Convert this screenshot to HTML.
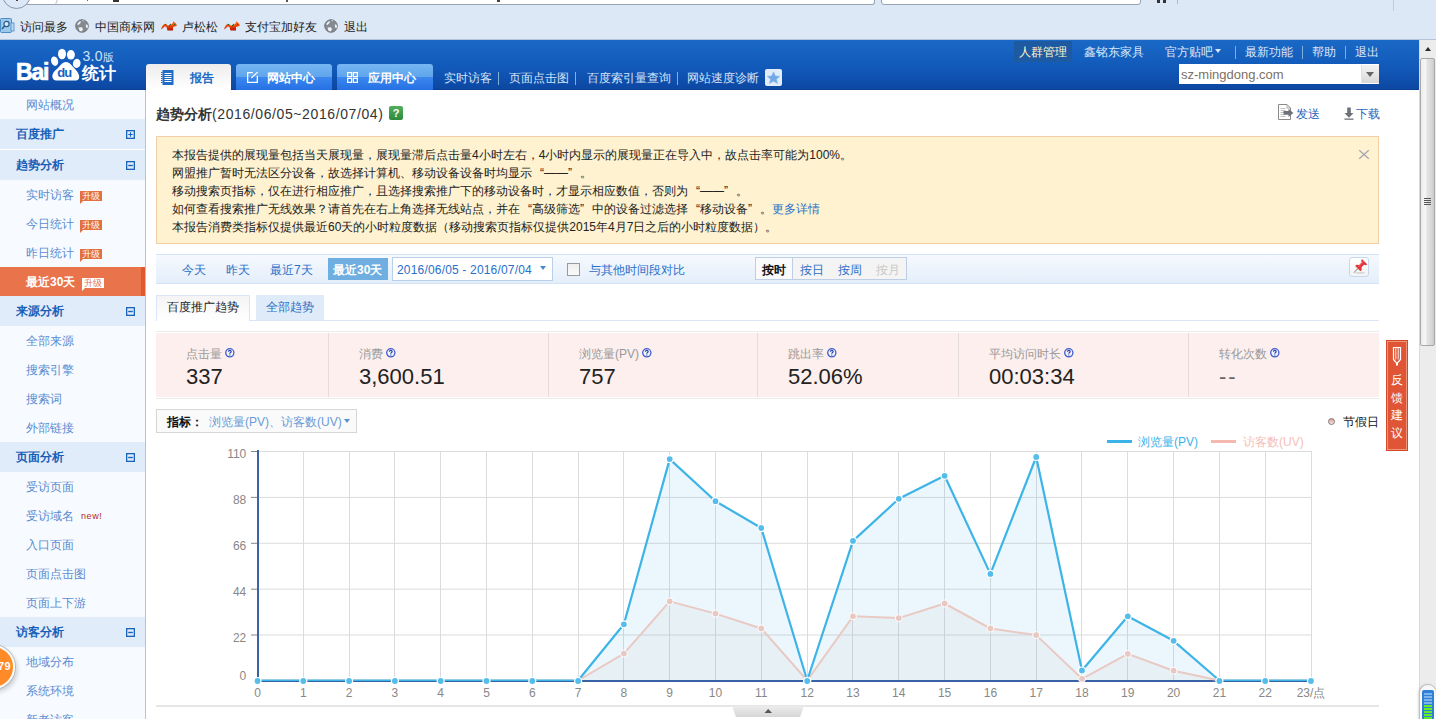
<!DOCTYPE html>
<html><head><meta charset="utf-8">
<style>
*{margin:0;padding:0;box-sizing:border-box}
html,body{width:1436px;height:719px;overflow:hidden;background:#fff;font-family:"Liberation Sans",sans-serif;font-size:12px;color:#333}
.a{position:absolute;white-space:nowrap}
.lq{display:inline-block;width:12px;text-align:right}
.rq{display:inline-block;width:12px;text-align:left}
#topbar{position:absolute;left:0;top:0;width:1436px;height:40px;background:#dce8f6;border-bottom:1px solid #b4c4d8}
#hdr{position:absolute;left:0;top:40px;width:1419px;height:50px;background:linear-gradient(#1a69c6,#1158b8 60%,#0c47a2);border-bottom:1px solid #0b3f94}
#side{position:absolute;left:0;top:90px;width:146px;height:629px;background:#f7fbff;border-right:1px solid #a9c5ee}
#scroll{position:absolute;left:1419px;top:40px;width:17px;height:679px;background:#ececec;border-left:1px solid #dadada}
.si{position:absolute;left:26px;color:#5b8bd0;font-size:12px;line-height:29px;height:29px;white-space:nowrap;padding-top:1px}
.sh{position:absolute;left:0;width:145px;height:30px;background:#e1ecfa;color:#1760b8;font-weight:bold;font-size:12px;line-height:30px;padding-left:16px;white-space:nowrap}
.pm{position:absolute;left:126px;top:11px;width:9px;height:9px}
.bd{display:inline-block;position:relative;vertical-align:middle;margin-left:6px;top:0px;width:22px;height:10px;background:#e3703f;color:#fff;font-size:9px;line-height:10px;text-align:center;font-weight:normal}
.bd:after{content:"";position:absolute;left:0;bottom:-3px;border-left:3px solid #e3703f;border-bottom:3px solid transparent}
.bdw:after{border-left-color:#fff}
</style></head><body>
<!-- browser bookmark bar -->
<div id="topbar">
  <div class="a" style="left:24px;top:-6px;width:851px;height:11px;background:#fff;border:1px solid #95a3b5;border-left:none;border-radius:0 0 3px 0"></div><div class="a" style="left:56px;top:0;width:1px;height:4px;background:#b8c0c8;transform:skewX(-20deg)"></div><div class="a" style="left:113px;top:0;width:6px;height:1.5px;background:#333"></div><div class="a" style="left:87px;top:0;width:1px;height:1px;background:#666"></div><div class="a" style="left:286px;top:0;width:2px;height:2px;background:#555"></div><div class="a" style="left:497px;top:0;width:3px;height:2px;background:#444"></div>
  <div class="a" style="left:881px;top:-6px;width:260px;height:11px;background:#fff;border:1px solid #95a3b5;border-radius:0 0 3px 3px"></div>
  <div class="a" style="left:2px;top:-20px;width:29px;height:29px;border-radius:50%;background:#dce8f6;border:1px solid #8796aa"></div><div class="a" style="left:16px;top:0;width:2px;height:1px;background:#444"></div>
  <div class="a" style="left:1393px;top:0;width:1px;height:11px;background:#c2ccd8"></div><div class="a" style="left:1157px;top:0;width:3px;height:3px;background:#333"></div><div class="a" style="left:1163px;top:0;width:3px;height:3px;background:#333"></div><div class="a" style="left:1177px;top:0;width:1px;height:4px;background:#b0b8c4"></div>
  <svg class="a" style="left:0;top:17px" width="16" height="17" viewBox="0 0 16 17"><rect x="0.5" y="1.5" width="11" height="14" rx="1" fill="#9cc8ec" stroke="#4a8cc4"/><rect x="11" y="6" width="3" height="8" fill="#bcd8f0" stroke="#4a8cc4" stroke-width="0.8"/><circle cx="6.5" cy="7" r="2.6" fill="#d8ecfa" stroke="#2a5a8a" stroke-width="1.2"/><line x1="4.6" y1="9" x2="2" y2="12" stroke="#2a5a8a" stroke-width="1.5"/></svg>
  <div class="a" style="left:20px;top:18px;font-size:12px;line-height:16px;margin-top:1px;color:#222">访问最多</div>
  <svg class="a" style="left:75px;top:19px" width="14" height="14" viewBox="0 0 14 14"><circle cx="7" cy="7" r="6.3" fill="#858a90" stroke="#6c7076" stroke-width="0.9"/><path d="M2.2 5.5 Q3 2.5 6 2.3 L5.5 4 L3.5 6 Z M3.5 8.5 L7 8.2 L8 10.5 L6.5 12.5 L4.5 11.8 Z M10.8 5.3 L12.8 6 L12.9 9 L11 8.6 Z M6.8 1.3 L9 1.4 L8.5 2.4 Z" fill="#eef2f8"/></svg>
  <div class="a" style="left:95px;top:18px;font-size:12px;line-height:16px;margin-top:1px;color:#222">中国商标网</div>
  <svg class="a" style="left:156px;top:16px" width="28" height="20" viewBox="0 0 28 20"><defs><linearGradient id="bg156" x1="0" y1="0" x2="0" y2="1"><stop offset="0.3" stop-color="#ff5a08"/><stop offset="1" stop-color="#b81204"/></linearGradient></defs><path d="M5 13.5 C6 10 7.5 8 9 8 C10.5 8 11.5 9.5 12.5 9.8 C14 9.5 15.5 8.5 16.5 7.5 L17.5 5.2 L19 6.8 C20 7.5 20.5 8.5 21 9.5 L19.5 10.2 L17 11 L17 14.5 L11.5 14.5 L10.5 11 C9.5 10 8 10.5 7 12 Z" fill="url(#bg156)"/><g fill="#1a6a1a"><circle cx="9.5" cy="8.4" r="0.7"/><circle cx="13.4" cy="9.5" r="0.7"/><circle cx="14.5" cy="8.4" r="0.6"/><circle cx="18.5" cy="8.5" r="0.7"/></g></svg>
  <div class="a" style="left:182px;top:18px;font-size:12px;line-height:16px;margin-top:1px;color:#222">卢松松</div>
  <svg class="a" style="left:219px;top:16px" width="28" height="20" viewBox="0 0 28 20"><defs><linearGradient id="bg219" x1="0" y1="0" x2="0" y2="1"><stop offset="0.3" stop-color="#ff5a08"/><stop offset="1" stop-color="#b81204"/></linearGradient></defs><path d="M5 13.5 C6 10 7.5 8 9 8 C10.5 8 11.5 9.5 12.5 9.8 C14 9.5 15.5 8.5 16.5 7.5 L17.5 5.2 L19 6.8 C20 7.5 20.5 8.5 21 9.5 L19.5 10.2 L17 11 L17 14.5 L11.5 14.5 L10.5 11 C9.5 10 8 10.5 7 12 Z" fill="url(#bg219)"/><g fill="#1a6a1a"><circle cx="9.5" cy="8.4" r="0.7"/><circle cx="13.4" cy="9.5" r="0.7"/><circle cx="14.5" cy="8.4" r="0.6"/><circle cx="18.5" cy="8.5" r="0.7"/></g></svg>
  <div class="a" style="left:245px;top:18px;font-size:12px;line-height:16px;margin-top:1px;color:#222">支付宝加好友</div>
  <svg class="a" style="left:324px;top:19px" width="14" height="14" viewBox="0 0 14 14"><circle cx="7" cy="7" r="6.3" fill="#858a90" stroke="#6c7076" stroke-width="0.9"/><path d="M2.2 5.5 Q3 2.5 6 2.3 L5.5 4 L3.5 6 Z M3.5 8.5 L7 8.2 L8 10.5 L6.5 12.5 L4.5 11.8 Z M10.8 5.3 L12.8 6 L12.9 9 L11 8.6 Z M6.8 1.3 L9 1.4 L8.5 2.4 Z" fill="#eef2f8"/></svg>
  <div class="a" style="left:344px;top:18px;font-size:12px;line-height:16px;margin-top:1px;color:#222">退出</div>
</div>
<div id="hdr">
  <!-- logo -->
  <svg class="a" style="left:14px;top:6px" width="104" height="36" viewBox="0 0 104 36">
    <text x="2" y="34.4" font-family="Liberation Sans" font-weight="bold" font-size="23" fill="#fff" stroke="#fff" stroke-width="0.7" letter-spacing="-1.2">Bai</text>
    <ellipse cx="40.6" cy="15.2" rx="3.5" ry="4.8" fill="#fff" transform="rotate(-15 40.6 15.2)"/>
    <ellipse cx="48" cy="8" rx="4" ry="5.2" fill="#fff"/>
    <ellipse cx="56.9" cy="8.8" rx="4" ry="4.8" fill="#fff"/>
    <ellipse cx="62.7" cy="17.4" rx="3.8" ry="4.6" fill="#fff" transform="rotate(15 62.7 17.4)"/>
    <path d="M52 16 C48 16 46 20 43 23 C39 26 38 29 38.5 31.5 C39 34 41 34.6 44 34.6 L60 34.6 C63 34.6 65 34 65.2 31.5 C65.5 29 64 26 61 23 C58 20 56 16 52 16 Z" fill="#fff"/>
    <text x="43.2" y="31.4" font-family="Liberation Sans" font-weight="bold" font-size="13" fill="#1762c2" letter-spacing="-0.8">du</text>
    <text x="68.5" y="15.4" font-family="Liberation Sans" font-size="14" fill="#cfe2fa" letter-spacing="0.3">3.0</text>
    <text x="88.5" y="15" font-family="Liberation Sans" font-size="11" fill="#cfe2fa">版</text>
    <text x="68" y="32.8" font-family="Liberation Sans" font-weight="bold" font-size="17" fill="#fff">统计</text>
  </svg>
  <!-- tabs -->
  <div class="a" style="left:146px;top:24px;width:85px;height:26px;border-radius:3px 3px 0 0;background:linear-gradient(#ececec,#fafafa 70%,#fff)">
    <svg class="a" style="left:15px;top:6px" width="13" height="15" viewBox="0 0 13 15"><rect x="1.5" y="0" width="11" height="15" fill="#1e6cc4"/><g stroke="#fff" stroke-width="1"><line x1="3.5" y1="3.5" x2="10.5" y2="3.5"/><line x1="3.5" y1="5.5" x2="10.5" y2="5.5"/><line x1="3.5" y1="7.5" x2="10.5" y2="7.5"/><line x1="3.5" y1="9.5" x2="10.5" y2="9.5"/><line x1="3.5" y1="11.5" x2="10.5" y2="11.5"/></g><g fill="#1e6cc4"><rect x="0" y="2" width="1.5" height="1"/><rect x="0" y="4" width="1.5" height="1"/><rect x="0" y="6" width="1.5" height="1"/><rect x="0" y="8" width="1.5" height="1"/><rect x="0" y="10" width="1.5" height="1"/><rect x="0" y="12" width="1.5" height="1"/></g></svg>
    <div class="a" style="left:44px;top:5px;font-size:12px;line-height:16px;margin-top:1px;font-weight:bold;color:#1a6ac6">报告</div>
  </div>
  <div class="a" style="left:236px;top:24px;width:96px;height:26px;border-radius:3px 3px 0 0;background:linear-gradient(#76b6f2,#5fa4ec 50%,#3b88ee 51%,#2670e4)">
    <svg class="a" style="left:11px;top:8px" width="12" height="12" viewBox="0 0 12 12"><path d="M5.8 0.65 H0.65 V10.35 H10.35 V3.8" fill="none" stroke="#fff" stroke-width="1.3"/><line x1="4.3" y1="6" x2="10.7" y2="0" stroke="#fff" stroke-width="1.1"/></svg>
    <div class="a" style="left:31px;top:5px;font-size:12px;line-height:16px;margin-top:1px;font-weight:bold;color:#fff">网站中心</div>
  </div>
  <div class="a" style="left:337px;top:24px;width:96px;height:26px;border-radius:3px 3px 0 0;background:linear-gradient(#76b6f2,#5fa4ec 50%,#3b88ee 51%,#2670e4)">
    <svg class="a" style="left:10px;top:8px" width="11" height="11" viewBox="0 0 11 11"><g fill="none" stroke="#fff" stroke-width="1.25"><rect x="0.62" y="0.62" width="4" height="4"/><rect x="6.38" y="0.62" width="4" height="4"/><rect x="0.62" y="6.38" width="4" height="4"/><rect x="6.38" y="6.38" width="4" height="4"/></g></svg>
    <div class="a" style="left:31px;top:5px;font-size:12px;line-height:16px;margin-top:1px;font-weight:bold;color:#fff">应用中心</div>
  </div>
  <div class="a" style="left:444px;top:29px;font-size:12px;line-height:16px;margin-top:1px;color:#d4e4f8">实时访客</div>
  <div class="a" style="left:498px;top:32px;width:1px;height:13px;background:#7fb2d8"></div>
  <div class="a" style="left:509px;top:29px;font-size:12px;line-height:16px;margin-top:1px;color:#d4e4f8">页面点击图</div>
  <div class="a" style="left:575px;top:32px;width:1px;height:13px;background:#7fb2d8"></div>
  <div class="a" style="left:587px;top:29px;font-size:12px;line-height:16px;margin-top:1px;color:#d4e4f8">百度索引量查询</div>
  <div class="a" style="left:677px;top:32px;width:1px;height:13px;background:#7fb2d8"></div>
  <div class="a" style="left:687px;top:29px;font-size:12px;line-height:16px;margin-top:1px;color:#d4e4f8">网站速度诊断</div>
  <div class="a" style="left:765px;top:29px;width:17px;height:17px;background:#e2edfb;border-radius:2px">
    <svg class="a" style="left:1px;top:1px" width="15" height="15" viewBox="0 0 15 15"><path d="M7.5 1.8 L9.4 5.9 L13.8 6.3 L10.5 9.2 L11.6 13.5 L7.5 11.3 L3.4 13.5 L4.5 9.2 L1.2 6.3 L5.6 5.9 Z" fill="#72aae6" stroke="#8cbcec" stroke-width="0.6" stroke-linejoin="round"/></svg>
  </div>
  <!-- top right -->
  <div class="a" style="left:1014px;top:1px;width:58px;height:21px;background:#1d5aa2"></div>
  <div class="a" style="left:1019px;top:3px;font-size:12px;line-height:16px;margin-top:1px;color:#fdf6cc">人群管理</div>
  <div class="a" style="left:1084px;top:3px;font-size:12px;line-height:16px;margin-top:1px;color:#dce8f8">鑫铭东家具</div>
  <div class="a" style="left:1165px;top:3px;font-size:12px;line-height:16px;margin-top:1px;color:#dce8f8">官方贴吧</div>
  <div class="a" style="left:1215px;top:9px;width:0;height:0;border-left:3.5px solid transparent;border-right:3.5px solid transparent;border-top:4px solid #dce8f8"></div>
  <div class="a" style="left:1235px;top:6px;width:1px;height:13px;background:#7fb2d8"></div>
  <div class="a" style="left:1245px;top:3px;font-size:12px;line-height:16px;margin-top:1px;color:#dce8f8">最新功能</div>
  <div class="a" style="left:1302px;top:6px;width:1px;height:13px;background:#7fb2d8"></div>
  <div class="a" style="left:1312px;top:3px;font-size:12px;line-height:16px;margin-top:1px;color:#dce8f8">帮助</div>
  <div class="a" style="left:1345px;top:6px;width:1px;height:13px;background:#7fb2d8"></div>
  <div class="a" style="left:1355px;top:3px;font-size:12px;line-height:16px;margin-top:1px;color:#dce8f8">退出</div>
  <div class="a" style="left:1179px;top:24px;width:200px;height:20px;background:#fff">
    <div class="a" style="left:2px;top:2px;font-size:13px;line-height:16px;margin-top:1px;color:#7d7064">sz-mingdong.com</div>
    <div class="a" style="left:182px;top:1px;width:18px;height:18px;background:linear-gradient(#f4f4f4,#d8d8d8);border-left:1px solid #e0e0e0"></div>
    <div class="a" style="left:187px;top:8px;width:0;height:0;border-left:4px solid transparent;border-right:4px solid transparent;border-top:5px solid #666"></div>
  </div>
</div>
<div id="side">
<div class="si" style="top:0px">网站概况</div>
<div class="sh" style="top:29px;height:30px">百度推广<svg class="pm" viewBox="0 0 9 9"><rect x="0.65" y="0.65" width="7.7" height="7.7" fill="none" stroke="#1a63b8" stroke-width="1.3"/><path d="M2.2 4.5H6.8M4.5 2.2V6.8" stroke="#1a63b8" stroke-width="1.15"/></svg></div>
<div class="a" style="left:0;top:59px;width:145px;height:1px;background:#fff"></div>
<div class="sh" style="top:60px;height:30px">趋势分析<svg class="pm" viewBox="0 0 9 9"><rect x="0.65" y="0.65" width="7.7" height="7.7" fill="none" stroke="#1a63b8" stroke-width="1.3"/><path d="M2.2 4.5H6.8" stroke="#1a63b8" stroke-width="1.4"/></svg></div>
<div class="si" style="top:90px">实时访客<span class="bd">升级</span></div>
<div class="si" style="top:119px">今日统计<span class="bd">升级</span></div>
<div class="si" style="top:148px">昨日统计<span class="bd">升级</span></div>
<div class="a" style="left:0;top:177px;width:145px;height:29px;background:#e9744b;border-right:4px solid #e0582e"></div>
<div class="si" style="top:177px;color:#fff;font-weight:bold">最近30天<span class="bd bdw" style="background:#fff;color:#e3703f;margin-left:7px">升级</span></div>
<div class="sh" style="top:206px;height:30px">来源分析<svg class="pm" viewBox="0 0 9 9"><rect x="0.65" y="0.65" width="7.7" height="7.7" fill="none" stroke="#1a63b8" stroke-width="1.3"/><path d="M2.2 4.5H6.8" stroke="#1a63b8" stroke-width="1.4"/></svg></div>
<div class="si" style="top:236px">全部来源</div>
<div class="si" style="top:265px">搜索引擎</div>
<div class="si" style="top:294px">搜索词</div>
<div class="si" style="top:323px">外部链接</div>
<div class="sh" style="top:352px;height:30px">页面分析<svg class="pm" viewBox="0 0 9 9"><rect x="0.65" y="0.65" width="7.7" height="7.7" fill="none" stroke="#1a63b8" stroke-width="1.3"/><path d="M2.2 4.5H6.8" stroke="#1a63b8" stroke-width="1.4"/></svg></div>
<div class="si" style="top:382px">受访页面</div>
<div class="si" style="top:411px">受访域名<span style="color:#b02828;font-size:9px;letter-spacing:0.6px;margin-left:7px;vertical-align:1px">new!</span></div>
<div class="si" style="top:440px">入口页面</div>
<div class="si" style="top:469px">页面点击图</div>
<div class="si" style="top:498px">页面上下游</div>
<div class="sh" style="top:527px;height:30px">访客分析<svg class="pm" viewBox="0 0 9 9"><rect x="0.65" y="0.65" width="7.7" height="7.7" fill="none" stroke="#1a63b8" stroke-width="1.3"/><path d="M2.2 4.5H6.8" stroke="#1a63b8" stroke-width="1.4"/></svg></div>
<div class="si" style="top:557px">地域分布</div>
<div class="si" style="top:586px">系统环境</div>
<div class="si" style="top:615px">新老访客</div>
</div>

<!-- main content -->
<div class="a" style="left:156px;top:105px;font-size:14px;line-height:18px;color:#333"><b>趋势分析</b><span style="letter-spacing:0.6px">(2016/06/05~2016/07/04)</span></div>
<div class="a" style="left:389px;top:106px;width:14px;height:14px;background:linear-gradient(#4fae5c,#2f8a3e);border-radius:2px;color:#fff;font-weight:bold;font-size:11px;line-height:14px;text-align:center">?</div>
<svg class="a" style="left:1277px;top:103px" width="18" height="18" viewBox="0 0 18 18"><path d="M1.5 1.5H10L13.5 5V16.5H1.5Z" fill="#fff" stroke="#8a8a8a"/><path d="M10 1.5V5H13.5" fill="none" stroke="#9a9a9a" stroke-width="0.8"/><path d="M3.5 5.5H8.5M3.5 7.5H8.5M3.5 9.5H7M3.5 11.5H7M3.5 13.5H8.5" stroke="#b0b0b0" stroke-width="0.8"/><path d="M6.5 8H11.5V5.8L16.3 9.9L11.5 14V11.8H6.5Z" fill="#6e7278"/></svg>
<div class="a" style="left:1296px;top:105px;font-size:12px;line-height:16px;margin-top:1px;color:#1e64c0">发送</div>
<svg class="a" style="left:1343px;top:104px" width="12" height="17" viewBox="0 0 12 17"><path d="M4.2 3.5H7.8V9H10.5L6 13.8L1.5 9H4.2Z" fill="#6e7278"/><rect x="1.5" y="14.5" width="9" height="1.3" fill="#6e7278"/></svg>
<div class="a" style="left:1356px;top:105px;font-size:12px;line-height:16px;margin-top:1px;color:#1e64c0">下载</div>

<div class="a" style="left:156px;top:136px;width:1223px;height:108px;background:#fff2d0;border:1px solid #f2cfa6"></div>
<div class="a" style="left:172px;top:146px;font-size:12px;line-height:18px;color:#222">本报告提供的展现量包括当天展现量，展现量滞后点击量4小时左右，4小时内显示的展现量正在导入中，故点击率可能为100%。<br>网盟推广暂时无法区分设备，故选择计算机、移动设备设备时均显示<span class="lq">“</span>——<span class="rq">”</span>。<br>移动搜索页指标，仅在进行相应推广，且选择搜索推广下的移动设备时，才显示相应数值，否则为<span class="lq">“</span>——<span class="rq">”</span>。<br>如何查看搜索推广无线效果？请首先在右上角选择无线站点，并在<span class="lq">“</span>高级筛选<span class="rq">”</span>中的设备过滤选择<span class="lq">“</span>移动设备<span class="rq">”</span>。<span style="color:#2a6fc8">更多详情</span><br>本报告消费类指标仅提供最近60天的小时粒度数据（移动搜索页指标仅提供2015年4月7日之后的小时粒度数据）。</div>
<svg class="a" style="left:1358px;top:149px" width="12" height="11" viewBox="0 0 12 11"><path d="M1.2 1.2L10.8 9.8M10.8 1.2L1.2 9.8" stroke="#a4a8b0" stroke-width="1.3"/></svg>

<!-- filter bar -->
<div class="a" style="left:156px;top:254px;width:1223px;height:30px;background:linear-gradient(#f6f9fe,#e4eefa);border-top:1px solid #d4e4f6;border-bottom:1px solid #d4e4f6"></div>
<div class="a" style="left:182px;top:261px;font-size:12px;line-height:16px;margin-top:1px;color:#2a6fc8">今天</div>
<div class="a" style="left:226px;top:261px;font-size:12px;line-height:16px;margin-top:1px;color:#2a6fc8">昨天</div>
<div class="a" style="left:270px;top:261px;font-size:12px;line-height:16px;margin-top:1px;color:#2a6fc8">最近7天</div>
<div class="a" style="left:328px;top:258px;width:60px;height:22px;background:#6eaee0"></div>
<div class="a" style="left:333px;top:261px;font-size:12px;line-height:16px;margin-top:1px;color:#fff;font-weight:bold">最近30天</div>
<div class="a" style="left:392px;top:257px;width:161px;height:24px;background:#fff;border:1px solid #b9d0ea"></div>
<div class="a" style="left:397px;top:261px;font-size:12px;line-height:16px;margin-top:1px;color:#2a6fc8;letter-spacing:0.18px">2016/06/05 - 2016/07/04</div>
<div class="a" style="left:540px;top:266px;width:0;height:0;border-left:3.5px solid transparent;border-right:3.5px solid transparent;border-top:4px solid #4a88d0"></div>
<div class="a" style="left:567px;top:263px;width:13px;height:13px;background:linear-gradient(#eee,#fafafa);border:1px solid #9a9a9a"></div>
<div class="a" style="left:589px;top:261px;font-size:12px;line-height:16px;margin-top:1px;color:#2a6fc8">与其他时间段对比</div>
<div class="a" style="left:755px;top:257px;width:152px;height:23px;background:#f4f4f4;border:1px solid #bccfe6"></div>
<div class="a" style="left:756px;top:258px;width:37px;height:21px;background:#fafafa;border-right:1px solid #bccfe6"></div>
<div class="a" style="left:762px;top:261px;font-size:12px;line-height:16px;margin-top:1px;color:#111;font-weight:bold">按时</div>
<div class="a" style="left:800px;top:261px;font-size:12px;line-height:16px;margin-top:1px;color:#2a6fc8">按日</div>
<div class="a" style="left:838px;top:261px;font-size:12px;line-height:16px;margin-top:1px;color:#2a6fc8">按周</div>
<div class="a" style="left:876px;top:261px;font-size:12px;line-height:16px;margin-top:1px;color:#c8c8c8">按月</div>
<div class="a" style="left:1349px;top:257px;width:20px;height:20px;border:1px solid #c5d8ee;border-radius:3px;background:linear-gradient(#fff,#f3f3f3)">
 <svg class="a" style="left:-1px;top:-1px" width="20" height="20" viewBox="0 0 20 20"><ellipse cx="11" cy="15.8" rx="5" ry="1" fill="#d8d8d8"/><g transform="translate(10.6 9.8) rotate(45) scale(0.85)"><path d="M-0.5 3 L0.5 3 L0.3 10 L-0.3 10 Z" fill="#777"/><path d="M-4.2 -8.5 H4.2 V-6.8 L2 -5.5 V-1.2 L4.4 0.8 V3 H-4.4 V0.8 L-2 -1.2 V-5.5 L-4.2 -6.8 Z" fill="#e2363c"/><path d="M-1 -8 V2.5" stroke="#f27a7e" stroke-width="0.8"/></g></svg>
</div>

<!-- tabs -->
<div class="a" style="left:156px;top:295px;width:94px;height:26px;background:linear-gradient(#f4f4f4,#fff);border:1px solid #dae6f6;border-bottom:none"></div>
<div class="a" style="left:167px;top:299px;font-size:12px;line-height:16px;color:#222">百度推广趋势</div>
<div class="a" style="left:256px;top:295px;width:68px;height:26px;background:#e0ebf9"></div>
<div class="a" style="left:266px;top:299px;font-size:12px;line-height:16px;color:#2a6fc8">全部趋势</div>
<div class="a" style="left:250px;top:320px;width:1129px;height:1px;background:#dae6f6"></div>
<div class="a" style="left:156px;top:331px;width:1223px;height:1px;background:#ececec"></div><div class="a" style="left:156px;top:333px;width:1223px;height:64px;background:#fcefed"></div><div class="a" style="left:156px;top:398px;width:1223px;height:1px;background:#ececec"></div>
<div class="a" style="left:186px;top:345px;font-size:12px;line-height:16px;margin-top:1px;color:#999">点击量<svg width="10" height="10" viewBox="0 0 10 10" style="vertical-align:0px;margin-left:3px"><circle cx="4.8" cy="4.8" r="4.1" fill="#f4f4f6" stroke="#3e5cd0" stroke-width="1.3"/><path d="M3.4 3.7Q3.5 2.4 4.8 2.4Q6.2 2.4 6.2 3.6Q6.2 4.3 5.3 4.8Q4.8 5.1 4.8 5.8" fill="none" stroke="#2a3eb0" stroke-width="1.1"/><rect x="4.25" y="6.5" width="1.1" height="1.1" fill="#2a3eb0"/></svg></div>
<div class="a" style="left:186px;top:365px;font-size:22px;line-height:24px;color:#222">337</div>
<div class="a" style="left:328px;top:333px;width:1px;height:64px;background:#e4dcdb"></div>
<div class="a" style="left:359px;top:345px;font-size:12px;line-height:16px;margin-top:1px;color:#999">消费<svg width="10" height="10" viewBox="0 0 10 10" style="vertical-align:0px;margin-left:3px"><circle cx="4.8" cy="4.8" r="4.1" fill="#f4f4f6" stroke="#3e5cd0" stroke-width="1.3"/><path d="M3.4 3.7Q3.5 2.4 4.8 2.4Q6.2 2.4 6.2 3.6Q6.2 4.3 5.3 4.8Q4.8 5.1 4.8 5.8" fill="none" stroke="#2a3eb0" stroke-width="1.1"/><rect x="4.25" y="6.5" width="1.1" height="1.1" fill="#2a3eb0"/></svg></div>
<div class="a" style="left:359px;top:365px;font-size:22px;line-height:24px;color:#222">3,600.51</div>
<div class="a" style="left:548px;top:333px;width:1px;height:64px;background:#e4dcdb"></div>
<div class="a" style="left:579px;top:345px;font-size:12px;line-height:16px;margin-top:1px;color:#999">浏览量(PV)<svg width="10" height="10" viewBox="0 0 10 10" style="vertical-align:0px;margin-left:3px"><circle cx="4.8" cy="4.8" r="4.1" fill="#f4f4f6" stroke="#3e5cd0" stroke-width="1.3"/><path d="M3.4 3.7Q3.5 2.4 4.8 2.4Q6.2 2.4 6.2 3.6Q6.2 4.3 5.3 4.8Q4.8 5.1 4.8 5.8" fill="none" stroke="#2a3eb0" stroke-width="1.1"/><rect x="4.25" y="6.5" width="1.1" height="1.1" fill="#2a3eb0"/></svg></div>
<div class="a" style="left:579px;top:365px;font-size:22px;line-height:24px;color:#222">757</div>
<div class="a" style="left:757px;top:333px;width:1px;height:64px;background:#e4dcdb"></div>
<div class="a" style="left:788px;top:345px;font-size:12px;line-height:16px;margin-top:1px;color:#999">跳出率<svg width="10" height="10" viewBox="0 0 10 10" style="vertical-align:0px;margin-left:3px"><circle cx="4.8" cy="4.8" r="4.1" fill="#f4f4f6" stroke="#3e5cd0" stroke-width="1.3"/><path d="M3.4 3.7Q3.5 2.4 4.8 2.4Q6.2 2.4 6.2 3.6Q6.2 4.3 5.3 4.8Q4.8 5.1 4.8 5.8" fill="none" stroke="#2a3eb0" stroke-width="1.1"/><rect x="4.25" y="6.5" width="1.1" height="1.1" fill="#2a3eb0"/></svg></div>
<div class="a" style="left:788px;top:365px;font-size:22px;line-height:24px;color:#222">52.06%</div>
<div class="a" style="left:958px;top:333px;width:1px;height:64px;background:#e4dcdb"></div>
<div class="a" style="left:989px;top:345px;font-size:12px;line-height:16px;margin-top:1px;color:#999">平均访问时长<svg width="10" height="10" viewBox="0 0 10 10" style="vertical-align:0px;margin-left:3px"><circle cx="4.8" cy="4.8" r="4.1" fill="#f4f4f6" stroke="#3e5cd0" stroke-width="1.3"/><path d="M3.4 3.7Q3.5 2.4 4.8 2.4Q6.2 2.4 6.2 3.6Q6.2 4.3 5.3 4.8Q4.8 5.1 4.8 5.8" fill="none" stroke="#2a3eb0" stroke-width="1.1"/><rect x="4.25" y="6.5" width="1.1" height="1.1" fill="#2a3eb0"/></svg></div>
<div class="a" style="left:989px;top:365px;font-size:22px;line-height:24px;color:#222">00:03:34</div>
<div class="a" style="left:1188px;top:333px;width:1px;height:64px;background:#e4dcdb"></div>
<div class="a" style="left:1219px;top:345px;font-size:12px;line-height:16px;margin-top:1px;color:#999">转化次数<svg width="10" height="10" viewBox="0 0 10 10" style="vertical-align:0px;margin-left:3px"><circle cx="4.8" cy="4.8" r="4.1" fill="#f4f4f6" stroke="#3e5cd0" stroke-width="1.3"/><path d="M3.4 3.7Q3.5 2.4 4.8 2.4Q6.2 2.4 6.2 3.6Q6.2 4.3 5.3 4.8Q4.8 5.1 4.8 5.8" fill="none" stroke="#2a3eb0" stroke-width="1.1"/><rect x="4.25" y="6.5" width="1.1" height="1.1" fill="#2a3eb0"/></svg></div>
<div class="a" style="left:1219px;top:365px;font-size:22px;line-height:24px;color:#666;letter-spacing:2px">--</div>

<div class="a" style="left:156px;top:409px;width:201px;height:24px;background:#fafafa;border:1px solid #d6d6d6"></div>
<div class="a" style="left:167px;top:413px;font-size:12px;line-height:16px;margin-top:1px;color:#111;font-weight:bold">指标：</div>
<div class="a" style="left:209px;top:413px;font-size:12px;line-height:16px;margin-top:1px;color:#6a9ad6">浏览量(PV)、访客数(UV)</div>
<div class="a" style="left:344px;top:419px;width:0;height:0;border-left:3.5px solid transparent;border-right:3.5px solid transparent;border-top:4.5px solid #5a92d8"></div>
<div class="a" style="left:1328px;top:418px;width:7px;height:7px;border-radius:50%;background:linear-gradient(#e89a92,#fbe4e0);border:1px solid #7a7a7a"></div>
<div class="a" style="left:1343px;top:413px;font-size:12px;line-height:16px;margin-top:1px;color:#111">节假日</div>
<div class="a" style="left:1107px;top:440px;width:25px;height:3px;background:#3ab4e8"></div>
<div class="a" style="left:1138px;top:434px;font-size:12px;line-height:16px;color:#3ab4e8">浏览量(PV)</div>
<div class="a" style="left:1211px;top:440px;width:25px;height:3px;background:#f5b9b0"></div>
<div class="a" style="left:1243px;top:434px;font-size:12px;line-height:16px;color:#f5c0b8">访客数(UV)</div>
<svg class="a" style="left:0;top:0" width="1436" height="719" viewBox="0 0 1436 719">
<line x1="258" y1="451.5" x2="1311.5" y2="451.5" stroke="#dcdcdc" stroke-width="1"/>
<line x1="258" y1="497.4" x2="1311.5" y2="497.4" stroke="#dcdcdc" stroke-width="1"/>
<line x1="258" y1="543.3" x2="1311.5" y2="543.3" stroke="#dcdcdc" stroke-width="1"/>
<line x1="258" y1="589.2" x2="1311.5" y2="589.2" stroke="#dcdcdc" stroke-width="1"/>
<line x1="258" y1="635.0" x2="1311.5" y2="635.0" stroke="#dcdcdc" stroke-width="1"/>
<line x1="303.5" y1="451" x2="303.5" y2="680" stroke="#dcdcdc" stroke-width="1"/>
<line x1="349.5" y1="451" x2="349.5" y2="680" stroke="#dcdcdc" stroke-width="1"/>
<line x1="394.5" y1="451" x2="394.5" y2="680" stroke="#dcdcdc" stroke-width="1"/>
<line x1="440.5" y1="451" x2="440.5" y2="680" stroke="#dcdcdc" stroke-width="1"/>
<line x1="486.5" y1="451" x2="486.5" y2="680" stroke="#dcdcdc" stroke-width="1"/>
<line x1="532.5" y1="451" x2="532.5" y2="680" stroke="#dcdcdc" stroke-width="1"/>
<line x1="578.5" y1="451" x2="578.5" y2="680" stroke="#dcdcdc" stroke-width="1"/>
<line x1="623.5" y1="451" x2="623.5" y2="680" stroke="#dcdcdc" stroke-width="1"/>
<line x1="669.5" y1="451" x2="669.5" y2="680" stroke="#dcdcdc" stroke-width="1"/>
<line x1="715.5" y1="451" x2="715.5" y2="680" stroke="#dcdcdc" stroke-width="1"/>
<line x1="761.5" y1="451" x2="761.5" y2="680" stroke="#dcdcdc" stroke-width="1"/>
<line x1="807.5" y1="451" x2="807.5" y2="680" stroke="#dcdcdc" stroke-width="1"/>
<line x1="852.5" y1="451" x2="852.5" y2="680" stroke="#dcdcdc" stroke-width="1"/>
<line x1="898.5" y1="451" x2="898.5" y2="680" stroke="#dcdcdc" stroke-width="1"/>
<line x1="944.5" y1="451" x2="944.5" y2="680" stroke="#dcdcdc" stroke-width="1"/>
<line x1="990.5" y1="451" x2="990.5" y2="680" stroke="#dcdcdc" stroke-width="1"/>
<line x1="1036.5" y1="451" x2="1036.5" y2="680" stroke="#dcdcdc" stroke-width="1"/>
<line x1="1081.5" y1="451" x2="1081.5" y2="680" stroke="#dcdcdc" stroke-width="1"/>
<line x1="1127.5" y1="451" x2="1127.5" y2="680" stroke="#dcdcdc" stroke-width="1"/>
<line x1="1173.5" y1="451" x2="1173.5" y2="680" stroke="#dcdcdc" stroke-width="1"/>
<line x1="1219.5" y1="451" x2="1219.5" y2="680" stroke="#dcdcdc" stroke-width="1"/>
<line x1="1265.5" y1="451" x2="1265.5" y2="680" stroke="#dcdcdc" stroke-width="1"/>
<line x1="1311.5" y1="451" x2="1311.5" y2="680" stroke="#dcdcdc" stroke-width="1"/>
<line x1="251" y1="451.5" x2="258" y2="451.5" stroke="#888" stroke-width="1"/>
<line x1="251" y1="497.4" x2="258" y2="497.4" stroke="#888" stroke-width="1"/>
<line x1="251" y1="543.3" x2="258" y2="543.3" stroke="#888" stroke-width="1"/>
<line x1="251" y1="589.2" x2="258" y2="589.2" stroke="#888" stroke-width="1"/>
<line x1="251" y1="635.0" x2="258" y2="635.0" stroke="#888" stroke-width="1"/>
<polygon points="257.5,680.5 257.5,680.5 303.3,680.5 349.1,680.5 394.9,680.5 440.7,680.5 486.5,680.5 532.3,680.5 578.1,680.5 623.9,624.3 669.7,459.1 715.5,501.2 761.3,528.0 807.2,680.5 853.0,540.9 898.8,498.8 944.6,475.8 990.4,573.9 1036.2,457.0 1082.0,670.5 1127.8,616.3 1173.6,640.8 1219.4,680.5 1265.2,680.5 1311.0,680.5 1311.0,680.5" fill="rgba(64,176,232,0.10)"/>
<polygon points="257.5,680.5 257.5,680.5 303.3,680.5 349.1,680.5 394.9,680.5 440.7,680.5 486.5,680.5 532.3,680.5 578.1,680.5 623.9,653.6 669.7,601.4 715.5,613.6 761.3,628.5 807.2,680.5 853.0,616.3 898.8,618.1 944.6,603.5 990.4,628.5 1036.2,635.1 1082.0,678.8 1127.8,653.9 1173.6,670.7 1219.4,680.5 1265.2,680.5 1311.0,680.5 1311.0,680.5" fill="rgba(200,190,185,0.12)"/>
<line x1="258" y1="450" x2="258" y2="681" stroke="#3a62a6" stroke-width="2"/>
<line x1="257" y1="681" x2="1312" y2="681" stroke="#3a62a6" stroke-width="2"/>
<polyline points="257.5,680.5 303.3,680.5 349.1,680.5 394.9,680.5 440.7,680.5 486.5,680.5 532.3,680.5 578.1,680.5 623.9,653.6 669.7,601.4 715.5,613.6 761.3,628.5 807.2,680.5 853.0,616.3 898.8,618.1 944.6,603.5 990.4,628.5 1036.2,635.1 1082.0,678.8 1127.8,653.9 1173.6,670.7 1219.4,680.5 1265.2,680.5 1311.0,680.5" fill="none" stroke="#e9c9c3" stroke-width="2" stroke-linejoin="round"/>
<polyline points="257.5,680.5 303.3,680.5 349.1,680.5 394.9,680.5 440.7,680.5 486.5,680.5 532.3,680.5 578.1,680.5 623.9,624.3 669.7,459.1 715.5,501.2 761.3,528.0 807.2,680.5 853.0,540.9 898.8,498.8 944.6,475.8 990.4,573.9 1036.2,457.0 1082.0,670.5 1127.8,616.3 1173.6,640.8 1219.4,680.5 1265.2,680.5 1311.0,680.5" fill="none" stroke="#3db4e8" stroke-width="2.2" stroke-linejoin="round"/>
<line x1="258" y1="681.5" x2="1312" y2="681.5" stroke="#3a62a6" stroke-width="1"/>
<circle cx="623.9" cy="653.6" r="3.5" fill="#e8c8c2" stroke="#fff" stroke-width="1"/>
<circle cx="669.7" cy="601.4" r="3.5" fill="#e8c8c2" stroke="#fff" stroke-width="1"/>
<circle cx="715.5" cy="613.6" r="3.5" fill="#e8c8c2" stroke="#fff" stroke-width="1"/>
<circle cx="761.3" cy="628.5" r="3.5" fill="#e8c8c2" stroke="#fff" stroke-width="1"/>
<circle cx="807.2" cy="680.5" r="3.5" fill="#e8c8c2" stroke="#fff" stroke-width="1"/>
<circle cx="853.0" cy="616.3" r="3.5" fill="#e8c8c2" stroke="#fff" stroke-width="1"/>
<circle cx="898.8" cy="618.1" r="3.5" fill="#e8c8c2" stroke="#fff" stroke-width="1"/>
<circle cx="944.6" cy="603.5" r="3.5" fill="#e8c8c2" stroke="#fff" stroke-width="1"/>
<circle cx="990.4" cy="628.5" r="3.5" fill="#e8c8c2" stroke="#fff" stroke-width="1"/>
<circle cx="1036.2" cy="635.1" r="3.5" fill="#e8c8c2" stroke="#fff" stroke-width="1"/>
<circle cx="1082.0" cy="678.8" r="3.5" fill="#e8c8c2" stroke="#fff" stroke-width="1"/>
<circle cx="1127.8" cy="653.9" r="3.5" fill="#e8c8c2" stroke="#fff" stroke-width="1"/>
<circle cx="1173.6" cy="670.7" r="3.5" fill="#e8c8c2" stroke="#fff" stroke-width="1"/>
<circle cx="257.5" cy="681.0" r="3.5" fill="#55bdea" stroke="#fff" stroke-width="1.2"/>
<circle cx="303.3" cy="681.0" r="3.5" fill="#55bdea" stroke="#fff" stroke-width="1.2"/>
<circle cx="349.1" cy="681.0" r="3.5" fill="#55bdea" stroke="#fff" stroke-width="1.2"/>
<circle cx="394.9" cy="681.0" r="3.5" fill="#55bdea" stroke="#fff" stroke-width="1.2"/>
<circle cx="440.7" cy="681.0" r="3.5" fill="#55bdea" stroke="#fff" stroke-width="1.2"/>
<circle cx="486.5" cy="681.0" r="3.5" fill="#55bdea" stroke="#fff" stroke-width="1.2"/>
<circle cx="532.3" cy="681.0" r="3.5" fill="#55bdea" stroke="#fff" stroke-width="1.2"/>
<circle cx="578.1" cy="681.0" r="3.5" fill="#55bdea" stroke="#fff" stroke-width="1.2"/>
<circle cx="623.9" cy="624.3" r="3.5" fill="#55bdea" stroke="#fff" stroke-width="1.2"/>
<circle cx="669.7" cy="459.1" r="3.5" fill="#55bdea" stroke="#fff" stroke-width="1.2"/>
<circle cx="715.5" cy="501.2" r="3.5" fill="#55bdea" stroke="#fff" stroke-width="1.2"/>
<circle cx="761.3" cy="528.0" r="3.5" fill="#55bdea" stroke="#fff" stroke-width="1.2"/>
<circle cx="807.2" cy="681.0" r="3.5" fill="#55bdea" stroke="#fff" stroke-width="1.2"/>
<circle cx="853.0" cy="540.9" r="3.5" fill="#55bdea" stroke="#fff" stroke-width="1.2"/>
<circle cx="898.8" cy="498.8" r="3.5" fill="#55bdea" stroke="#fff" stroke-width="1.2"/>
<circle cx="944.6" cy="475.8" r="3.5" fill="#55bdea" stroke="#fff" stroke-width="1.2"/>
<circle cx="990.4" cy="573.9" r="3.5" fill="#55bdea" stroke="#fff" stroke-width="1.2"/>
<circle cx="1036.2" cy="457.0" r="3.5" fill="#55bdea" stroke="#fff" stroke-width="1.2"/>
<circle cx="1082.0" cy="670.5" r="3.5" fill="#55bdea" stroke="#fff" stroke-width="1.2"/>
<circle cx="1127.8" cy="616.3" r="3.5" fill="#55bdea" stroke="#fff" stroke-width="1.2"/>
<circle cx="1173.6" cy="640.8" r="3.5" fill="#55bdea" stroke="#fff" stroke-width="1.2"/>
<circle cx="1219.4" cy="681.0" r="3.5" fill="#55bdea" stroke="#fff" stroke-width="1.2"/>
<circle cx="1265.2" cy="681.0" r="3.5" fill="#55bdea" stroke="#fff" stroke-width="1.2"/>
<circle cx="1311.0" cy="681.0" r="3.5" fill="#55bdea" stroke="#fff" stroke-width="1.2"/>
<text x="246.3" y="458.0" text-anchor="end" font-family="Liberation Sans" font-size="12" fill="#888">110</text>
<text x="246.3" y="503.9" text-anchor="end" font-family="Liberation Sans" font-size="12" fill="#888">88</text>
<text x="246.3" y="549.8" text-anchor="end" font-family="Liberation Sans" font-size="12" fill="#888">66</text>
<text x="246.3" y="595.7" text-anchor="end" font-family="Liberation Sans" font-size="12" fill="#888">44</text>
<text x="246.3" y="641.5" text-anchor="end" font-family="Liberation Sans" font-size="12" fill="#888">22</text>
<text x="246.3" y="680" text-anchor="end" font-family="Liberation Sans" font-size="12" fill="#888">0</text>
<text x="257.5" y="696.6" text-anchor="middle" font-family="Liberation Sans" font-size="12" fill="#888">0</text>
<text x="303.3" y="696.6" text-anchor="middle" font-family="Liberation Sans" font-size="12" fill="#888">1</text>
<text x="349.1" y="696.6" text-anchor="middle" font-family="Liberation Sans" font-size="12" fill="#888">2</text>
<text x="394.9" y="696.6" text-anchor="middle" font-family="Liberation Sans" font-size="12" fill="#888">3</text>
<text x="440.7" y="696.6" text-anchor="middle" font-family="Liberation Sans" font-size="12" fill="#888">4</text>
<text x="486.5" y="696.6" text-anchor="middle" font-family="Liberation Sans" font-size="12" fill="#888">5</text>
<text x="532.3" y="696.6" text-anchor="middle" font-family="Liberation Sans" font-size="12" fill="#888">6</text>
<text x="578.1" y="696.6" text-anchor="middle" font-family="Liberation Sans" font-size="12" fill="#888">7</text>
<text x="623.9" y="696.6" text-anchor="middle" font-family="Liberation Sans" font-size="12" fill="#888">8</text>
<text x="669.7" y="696.6" text-anchor="middle" font-family="Liberation Sans" font-size="12" fill="#888">9</text>
<text x="715.5" y="696.6" text-anchor="middle" font-family="Liberation Sans" font-size="12" fill="#888">10</text>
<text x="761.3" y="696.6" text-anchor="middle" font-family="Liberation Sans" font-size="12" fill="#888">11</text>
<text x="807.2" y="696.6" text-anchor="middle" font-family="Liberation Sans" font-size="12" fill="#888">12</text>
<text x="853.0" y="696.6" text-anchor="middle" font-family="Liberation Sans" font-size="12" fill="#888">13</text>
<text x="898.8" y="696.6" text-anchor="middle" font-family="Liberation Sans" font-size="12" fill="#888">14</text>
<text x="944.6" y="696.6" text-anchor="middle" font-family="Liberation Sans" font-size="12" fill="#888">15</text>
<text x="990.4" y="696.6" text-anchor="middle" font-family="Liberation Sans" font-size="12" fill="#888">16</text>
<text x="1036.2" y="696.6" text-anchor="middle" font-family="Liberation Sans" font-size="12" fill="#888">17</text>
<text x="1082.0" y="696.6" text-anchor="middle" font-family="Liberation Sans" font-size="12" fill="#888">18</text>
<text x="1127.8" y="696.6" text-anchor="middle" font-family="Liberation Sans" font-size="12" fill="#888">19</text>
<text x="1173.6" y="696.6" text-anchor="middle" font-family="Liberation Sans" font-size="12" fill="#888">20</text>
<text x="1219.4" y="696.6" text-anchor="middle" font-family="Liberation Sans" font-size="12" fill="#888">21</text>
<text x="1265.2" y="696.6" text-anchor="middle" font-family="Liberation Sans" font-size="12" fill="#888">22</text>
<text x="1311.0" y="696.6" text-anchor="middle" font-family="Liberation Sans" font-size="12" fill="#888">23/点</text>
</svg>
<div class="a" style="left:156px;top:705px;width:1223px;height:2px;background:#e6e6e6"></div>
<svg class="a" style="left:732px;top:706px" width="72" height="11" viewBox="0 0 72 11"><defs><linearGradient id="hg" x1="0" y1="0" x2="0" y2="1"><stop offset="0" stop-color="#ececec"/><stop offset="1" stop-color="#d6d6d6"/></linearGradient></defs><path d="M0 0H72L68 11H4Z" fill="url(#hg)"/><path d="M32.5 7H40L36.2 3Z" fill="#555"/></svg>
<!-- feedback -->
<div class="a" style="left:1386px;top:340px;width:22px;height:111px;background:#e05535;border:1px solid #d34828;box-shadow:inset 0 0 0 1px #f0957a"></div>
<svg class="a" style="left:1392px;top:346px" width="10" height="21" viewBox="0 0 10 21"><path d="M1.5 1.5H8.5V13.5L5 17.5L1.5 13.5Z" fill="none" stroke="#fff" stroke-width="1.2"/><path d="M3.8 1.5V13.5M6.2 1.5V13.5" stroke="#fff" stroke-width="0.9"/><rect x="4" y="17.5" width="2" height="2" fill="#fff"/></svg>
<div class="a" style="left:1390px;top:372px;width:14px;font-size:12px;line-height:17.6px;color:#fff;white-space:normal;text-align:center">反馈建议</div>
<!-- orange circle -->
<div class="a" style="left:-29px;top:645px;width:44px;height:44px;border-radius:50%;background:radial-gradient(circle,#ff8a28 70%,#f07a18 88%,#d8620a 100%);border:2px solid #fbfbfb;box-shadow:0 0 0 1px #b8b8b8,2px 3px 5px rgba(0,0,0,0.2)"></div>
<div class="a" style="left:-2px;top:659px;font-size:11px;line-height:14px;color:#fff;font-weight:bold;letter-spacing:0.5px">79</div>
<div id="scroll">
  <div class="a" style="left:5px;top:7px;width:0;height:0;border-left:3.5px solid transparent;border-right:3.5px solid transparent;border-bottom:4px solid #2a2a2a"></div>
  <div class="a" style="left:0px;top:18px;width:15px;height:288px;border:1px solid #a8a8a8;border-radius:2px;background:linear-gradient(90deg,#ededed,#f6f6f6 35%,#e4e4e4 45%,#d6d6d6 85%,#c8c8c8)"></div>
  <div class="a" style="left:4px;top:158px;width:7px;height:1px;background:#555;box-shadow:0 2px 0 #555,0 4px 0 #555,0 6px 0 #555"></div>
  <div class="a" style="left:-1px;top:644px;width:18px;height:40px;border-radius:9px 9px 0 0;background:#f8f8f8;border:1px solid #c0c0c0;box-shadow:-1px 0 2px rgba(0,0,0,0.15)"></div>
  <div class="a" style="left:2px;top:650px;width:12px;height:30px;border-radius:2px;background:#2f7fd6"></div>
  <div class="a" style="left:4px;top:653px;width:8px;height:2px;background:#7fb3ec;box-shadow:0 3px 0 #7fb3ec,0 6px 0 #7fb3ec,0 9px 0 #7fb3ec,0 12px 0 #66ee22,0 15px 0 #66ee22,0 18px 0 #66ee22,0 21px 0 #66ee22,0 24px 0 #66ee22"></div>
</div>
</div>
</body></html>
